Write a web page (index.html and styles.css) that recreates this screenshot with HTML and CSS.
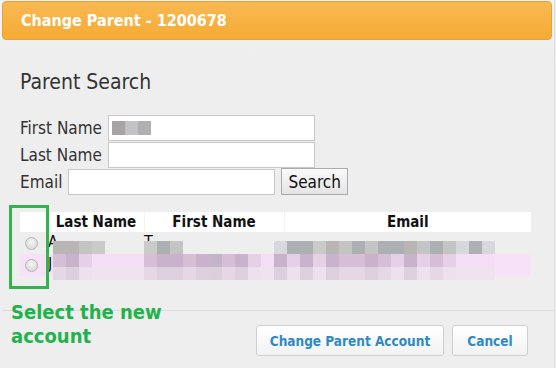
FILE: index.html
```html
<!DOCTYPE html>
<html>
    <head>
        <title>Change Parent - 1200678</title>
        <link rel="stylesheet" href="styles.css">
    </head>
    <body>
        <div class="dialog">
            <header class="titlebar">Change Parent - 1200678</header>
            <div class="content">
                <h2>Parent Search</h2>
                <div class="search">
                    <div class="row">
                        <label>First Name</label>
                        <div class="input"><span class="m m-a"></span><span class="m m-b"></span><span class="m m-c"></span></div>
                    </div>
                    <div class="row">
                        <label>Last Name</label>
                        <div class="input"></div>
                    </div>
                    <div class="row">
                        <label>Email</label>
                        <div class="input"></div>
                        <button class="btn-search">Search</button>
                    </div>
                </div>
                <table class="results">
                    <colgroup>
                        <col class="c-sel">
                        <col class="c-last">
                        <col class="c-first">
                        <col class="c-email">
                    </colgroup>
                    <thead>
                        <tr>
                            <th class="sel"></th>
                            <th>Last Name</th>
                            <th>First Name</th>
                            <th>Email</th>
                        </tr>
                    </thead>
                    <tbody>
                        <tr class="first-row">
                            <td class="sel"><span class="radio"></span></td>
                            <td><span class="lead">A</span><span class="blur"><i class="g1"></i><i class="g1"></i><i class="g2"></i><i class="g4"></i></span></td>
                            <td><span class="lead none">T</span><span class="blur"><i class="g4"></i><i class="g3"></i><i class="g2"></i></span></td>
                            <td class="email"><span class="blur"><i class="g5"></i><i class="g3"></i><i class="g3"></i><i class="g4"></i><i class="g1"></i><i class="g2"></i><i class="g3"></i><i class="g2"></i><i class="g3"></i><i class="g3"></i><i class="g1"></i><i class="g2"></i><i class="g3"></i><i class="g2"></i><i class="g5"></i><i class="g3"></i><i class="g5"></i></span></td>
                        </tr>
                        <tr class="alt">
                            <td class="sel"><span class="radio"></span></td>
                            <td><span class="lead">J</span><span class="blur two"><i class="p1"></i><i class="p2"></i><i class="p3"></i><i class="p0"></i><i class="p0"></i><i class="p0"></i><i class="p0"></i></span></td>
                            <td><span class="blur two"><i class="p1"></i><i class="p2"></i><i class="p2"></i><i class="p1"></i><i class="p2"></i><i class="p4"></i><i class="p1"></i><i class="p2"></i><i class="p3"></i><i class="p0"></i><i class="p0"></i></span></td>
                            <td class="email"><span class="blur two"><i class="p2"></i><i class="p3"></i><i class="p2"></i><i class="p3"></i><i class="p2"></i><i class="p1"></i><i class="p1"></i><i class="p2"></i><i class="p1"></i><i class="p3"></i><i class="p2"></i><i class="p3"></i><i class="p1"></i><i class="p3"></i><i class="p0"></i><i class="p0"></i><i class="p0"></i></span></td>
                        </tr>
                    </tbody>
                </table>
            </div>
            <footer class="buttons">
                <button class="btn btn-change">Change Parent Account</button>
                <button class="btn btn-cancel">Cancel</button>
            </footer>
            <div class="mark"></div>
            <p class="note">Select the new<br>account</p>
        </div>
    </body>
</html>
```

FILE: styles.css
```css
body {
    margin: 0;
    background: #eeeeee;
    font-family: "DejaVu Sans Condensed", "DejaVu Sans", Verdana, sans-serif;
    color: #333;
}
.dialog {
    position: relative;
    width: 550px;
    height: 368px;
    padding: 1px 2px 0 2px;
    border-right: 1px solid #dddddd;
    background: linear-gradient(#f4f4f4, #eeeeee 60px);
}
.titlebar {
    box-sizing: border-box;
    height: 39px;
    display: flex;
    align-items: center;
    padding: 0 18px;
    border: 1px solid #eba13a;
    border-radius: 4px;
    background: linear-gradient(#f8b953, #f6ab33);
    color: #fff;
    font-weight: bold;
    font-size: 16px;
}
.content {
    padding: 30px 0 0 18px;
}
h2 {
    margin: 0 0 20px 0;
    font-size: 21px;
    line-height: 24px;
    font-weight: normal;
    color: #333;
}
.row {
    display: flex;
    align-items: center;
    gap: 6px;
    height: 27px;
    font-size: 17px;
}
.input {
    box-sizing: border-box;
    width: 207px;
    height: 26px;
    background: #fff;
    border: 1px solid #c8c8c8;
    display: flex;
    align-items: center;
    padding-left: 3px;
}
.btn-search {
    height: 27px;
    padding: 0 6px;
    font-family: inherit;
    font-size: 17px;
    color: #111;
    border: 1px solid #aaa;
    background: linear-gradient(#fafafa, #e4e4e4);
}
.m {
    display: inline-block;
    width: 13px;
    height: 14px;
}
.m-a { background: #a8a4a6; }
.m-b { background: #c3c2c4; }
.m-c { background: #b0afb2; }

.results {
    margin-top: 17px;
    border-collapse: collapse;
    table-layout: fixed;
    width: 511px;
    font-size: 15px;
}
.c-sel { width: 28px; }
.c-last { width: 96px; }
.c-first { width: 140px; }
.c-email { width: 247px; }
.results thead tr {
    background: #fff;
}
.results th {
    height: 20px;
    padding: 0;
    color: #111;
    white-space: nowrap;
    border-left: 1px solid #f2f2f2;
}
.results th.sel {
    border-left: none;
}
.results td {
    padding: 0;
    white-space: nowrap;
    vertical-align: top;
}
.results tr.first-row td {
    height: 22px;
}
.results tr.alt td {
    height: 21px;
}
.results td.email .blur {
    margin-left: -10px;
}
.results tr.alt {
    background: #f6e1f6;
}
.radio {
    display: inline-block;
    width: 11px;
    height: 11px;
    margin: 5px 0 0 5px;
    border-radius: 50%;
    border: 1px solid #b5b5b5;
    background: radial-gradient(circle at 50% 35%, #f4f4f4, #d2d2d2);
}
.lead {
    display: inline-block;
    width: 5px;
    font-size: 16px;
    color: #111;
}
.lead.none {
    width: 0;
}
.blur {
    display: inline-flex;
    vertical-align: top;
    margin-top: 9px;
    height: 13px;
}
.blur i {
    display: block;
    width: 13px;
    height: 13px;
}
.results tr.alt .blur {
    margin-top: 0;
}
.blur.two i {
    height: 26px;
}
.g1 { background: #b9b5b5; }
.g2 { background: #c4c4c4; }
.g3 { background: #adb0b3; }
.g4 { background: #cacbc8; }
.g5 { background: #d7d8db; }
.p0 { background: linear-gradient(#f3def3 50%, #efe3ef 50%); }
.p1 { background: linear-gradient(#d5bfd6 50%, #e5d7e3 50%); }
.p2 { background: linear-gradient(#c9b3cc 50%, #ddd0de 50%); }
.p3 { background: linear-gradient(#e6d0e8 50%, #eee1ee 50%); }
.p4 { background: linear-gradient(#c4b4c8 50%, #dccfdc 50%); }

.buttons {
    position: absolute;
    left: 2px;
    right: 0;
    top: 310px;
    border-top: 1px solid #dcdcdc;
    display: flex;
    justify-content: flex-end;
    gap: 8px;
    padding: 14px 26px 0 0;
}
.btn {
    height: 31px;
    padding: 0;
    font-family: inherit;
    font-size: 13.5px;
    font-weight: bold;
    color: #2f8ac2;
    border: 1px solid #cfcfcf;
    border-radius: 3px;
    background: linear-gradient(#ffffff, #f2f2f2);
}
.btn-change {
    width: 188px;
}
.btn-cancel {
    width: 76px;
}
.mark {
    position: absolute;
    left: 9px;
    top: 205px;
    width: 34px;
    height: 78px;
    border: 3px solid #2fb54a;
}
.note {
    position: absolute;
    left: 11px;
    top: 300px;
    margin: 0;
    font-size: 20px;
    line-height: 24px;
    font-weight: bold;
    color: #22b14c;
}
```
